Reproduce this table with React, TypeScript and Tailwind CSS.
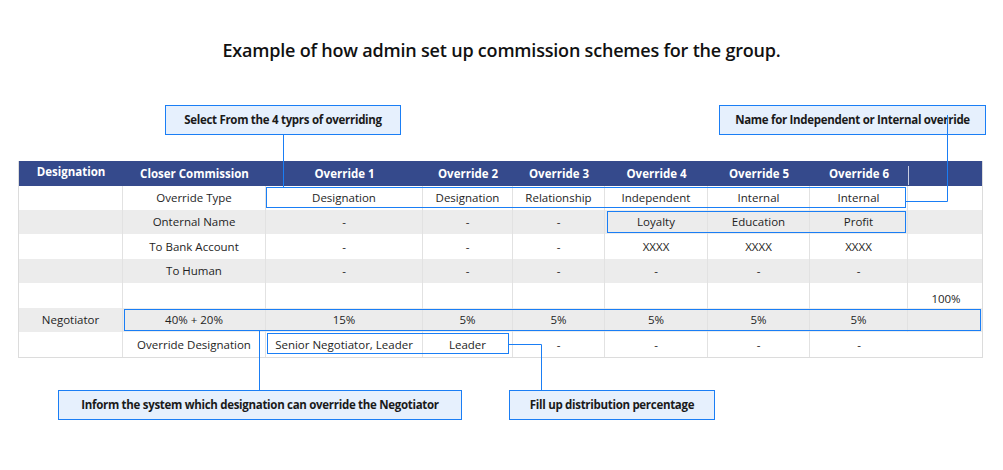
import React from "react";

const cols = "grid-cols-[104px_143px_157px_90px_92px_103px_102px_98px_76px]";

type Row = { cells: string[]; gray?: boolean; h: string };

const rows: Row[] = [
  { cells: ["", "Override Type", "Designation", "Designation", "Relationship", "Independent", "Internal", "Internal", ""], h: "h-[24px]" },
  { cells: ["", "Onternal Name", "-", "-", "-", "Loyalty", "Education", "Profit", ""], gray: true, h: "h-[24px]" },
  { cells: ["", "To Bank Account", "-", "-", "-", "XXXX", "XXXX", "XXXX", ""], h: "h-[25px]" },
  { cells: ["", "To Human", "-", "-", "-", "-", "-", "-", ""], gray: true, h: "h-[24px]" },
  { cells: ["", "", "", "", "", "", "", "", "100%"], h: "h-[25px]" },
  { cells: ["Negotiator", "40% + 20%", "15%", "5%", "5%", "5%", "5%", "5%", ""], gray: true, h: "h-[24px]" },
  { cells: ["", "Override Designation", "Senior Negotiator, Leader", "Leader", "-", "-", "-", "-", ""], h: "h-[25px]" },
];

const headers = ["Designation", "Closer Commission", "Override 1", "Override 2", "Override 3", "Override 4", "Override 5", "Override 6", ""];

const calloutCls =
  "absolute h-[30px] bg-[#e6f0fd] border border-[#1a7ef5] flex items-center justify-center text-[11.5px] font-bold tracking-[-0.3px] text-[#1a1a1a]";

export default function App() {
  return (
    <div
      className="relative w-[1003px] h-[470px] bg-white text-[#1e1e1e] overflow-hidden"
      style={{ fontFamily: '"Open Sans", "Noto Sans", sans-serif' }}
    >
      <h1 className="pt-[37px] text-center text-[18px] font-semibold text-[#111] leading-[26px] tracking-[-0.2px]">
        Example of how admin set up commission schemes for the group.
      </h1>

      <div className="ml-[18px] mt-[98px] w-[965px] border-l border-r border-b border-[#dcdcdc]">
        <div className={`grid ${cols} h-[25px] bg-[#354a8c] text-white text-[11.5px] font-bold`}>
          {headers.map((h, i) => (
            <div key={i} className="flex items-center justify-center">
              {i === 8 ? (
                <div className="w-full h-full flex items-start">
                  <div className="mt-[5px] h-[19px] border-l border-[#c8cde0]" />
                </div>
              ) : (
                <span className={i === 0 ? "-mt-[3px]" : ""}>{h}</span>
              )}
            </div>
          ))}
        </div>
        {rows.map((r, ri) => (
          <div key={ri} className={`grid ${cols} ${r.h} ${r.gray ? "bg-[#ececec]" : "bg-white"} text-[11.5px]`}>
            {r.cells.map((c, ci) => {
              const lastRow = ri === rows.length - 1;
              const border =
                ci === 8 ? "" : lastRow && ci === 7 ? "" : "border-r border-[#e2e2e2]";
              const isHundred = c === "100%";
              return (
                <div
                  key={ci}
                  className={`flex justify-center ${isHundred ? "items-end pb-[1px]" : "items-center"} ${border}`}
                >
                  {c}
                </div>
              );
            })}
          </div>
        ))}
      </div>

      {/* highlight boxes */}
      <div className="absolute left-[266px] top-[187px] w-[640px] h-[21px] border border-[#1a7ef5]" />
      <div className="absolute left-[607px] top-[211px] w-[299px] h-[22px] border border-[#1a7ef5]" />
      <div className="absolute left-[124px] top-[309px] w-[857px] h-[22px] border border-[#1a7ef5]" />
      <div className="absolute left-[267px] top-[333px] w-[242px] h-[21px] border border-[#1a7ef5]" />

      {/* callouts */}
      <div className={`${calloutCls} left-[165px] top-[105px] w-[236px]`}>
        Select From the 4 typrs of overriding
      </div>
      <div className={`${calloutCls} left-[719px] top-[105px] w-[267px]`}>
        Name for Independent or Internal override
      </div>
      <div className={`${calloutCls} left-[58px] top-[390px] w-[404px]`}>
        Inform the system which designation can override the Negotiator
      </div>
      <div className={`${calloutCls} left-[509px] top-[390px] w-[206px]`}>
        Fill up distribution percentage
      </div>

      {/* connector lines */}
      <svg className="absolute left-0 top-0 pointer-events-none" width="1003" height="470">
        <g stroke="#1a7ef5" strokeWidth="1" fill="none">
          <path d="M283.5 135 V187" />
          <path d="M947.5 115 V201.5 H906" />
          <path d="M259.5 331 V390" />
          <path d="M509 344.5 H541.5 V390" />
        </g>
      </svg>
    </div>
  );
}
